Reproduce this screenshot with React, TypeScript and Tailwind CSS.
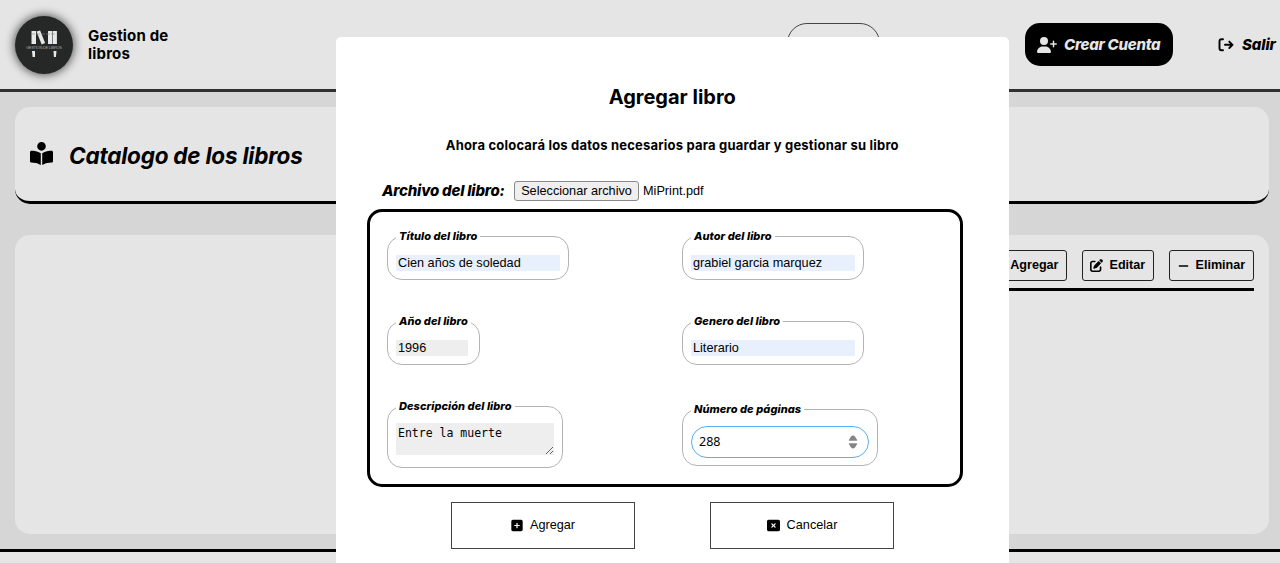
import React from "react";
import {
  FaUserPlus,
  FaBookOpenReader,
  FaPenToSquare,
  FaMinus,
  FaPlus,
  FaSquarePlus,
  FaRectangleXmark,
} from "react-icons/fa6";

function Logo() {
  return (
    <div className="h-[58px] w-[58px] shrink-0 rounded-full bg-[#252827] shadow-[0_0_10px_1px_rgba(0,0,0,0.65)]">
      <svg viewBox="0 0 58 58" className="h-full w-full">
        <g fill="#e8e8e8">
          <rect x="16.500" y="15" width="4.500" height="13" />
          <path d="M21.500 15.500l3.600-.9 5 12.400-3.400 1.600z" />
          <rect x="33" y="15" width="4.200" height="13" />
          <rect x="37.700" y="15" width="4.200" height="13" />
          <path d="M17 35h3v6h-2.400zM38.500 35h3l-.6 6h-2z" />
        </g>
        <path d="M16 18h25" stroke="#888" strokeWidth=".6" strokeDasharray="4 1" />
        <text x="29" y="33.400" textAnchor="middle" fill="#a5a5a5" fontSize="4" fontFamily="Liberation Sans, sans-serif" textLength="36">
          GESTION DE LIBROS
        </text>
      </svg>
    </div>
  );
}

function LogoutIcon() {
  return (
    <svg
      viewBox="0 0 16 14"
      className="mr-2 h-[14px] w-4"
      fill="none"
      stroke="currentColor"
      strokeWidth="1.9"
      strokeLinecap="round"
      strokeLinejoin="round"
    >
      <path d="M5 1.200H3.500Q1.500 1.200 1.500 3.200V10.300Q1.500 12.300 3.500 12.300H5" />
      <path d="M7 6.800H14.500M11.300 3.600L14.500 6.800L11.300 10" />
    </svg>
  );
}

function Field({ label, className, children }: { label: string; className: string; children: React.ReactNode }) {
  return (
    <fieldset className={`rounded-[15px] border border-[#b3b3b3] px-2 ${className}`}>
      <legend className="h-[15px] px-[3px] font-['Inter',sans-serif] text-[11px] leading-[15px] font-extrabold tracking-[0.05px] whitespace-nowrap italic">
        {label}
      </legend>
      {children}
    </fieldset>
  );
}

const toolButton =
  "flex h-[31px] items-center rounded-[3px] border border-[#222] text-[12.6px] font-bold whitespace-nowrap";
const actionButton =
  "flex h-[47px] w-[184px] items-center justify-center gap-[7px] border border-[#444] text-[12.7px]";
const autofill = "block h-4 w-[164px] bg-[#e8f0fe] px-0.5 text-[12.7px] leading-4 outline-none";

function Modal() {
  return (
    <section className="absolute top-[37px] left-[336px] h-[526px] w-[672.5px] rounded-t-[5px] bg-white">
      <h2 className="pt-[46px] text-center font-['Inter',sans-serif] text-[20px] leading-7 font-bold">Agregar libro</h2>
      <p className="mt-[24px] text-center font-['Inter',sans-serif] text-[13px] leading-5 font-bold tracking-[0.2px]">
        Ahora colocará los datos necesarios para guardar y gestionar su libro
      </p>
      <div className="mt-[26px] ml-[46px] flex h-5 items-center">
        <label className="w-[132px] pt-px font-['Inter',sans-serif] text-[15px] font-extrabold tracking-[-0.2px] whitespace-nowrap italic">
          Archivo del libro:
        </label>
        <button className="h-5 w-[125px] rounded-[3px] border border-[#8a8a8a] bg-[#efefef] text-[12.7px] leading-4 whitespace-nowrap">
          Seleccionar archivo
        </button>
        <span className="ml-1 pt-0.5 text-[12.7px]">MiPrint.pdf</span>
      </div>
      <div className="mt-2 ml-[31px] grid h-[278px] w-[596px] grid-cols-[295px_1fr] grid-rows-[51px_51px_70px] content-start items-center justify-items-start gap-y-[34px] rounded-[15px] border-3 border-black pt-[17px] pl-[17px]">
        <Field label="Título del libro" className="h-[51px] w-[182px]">
          <input className={`mt-[11px] ${autofill}`} defaultValue="Cien años de soledad" />
        </Field>
        <Field label="Autor del libro" className="h-[51px] w-[182px]">
          <input className={`mt-[11px] ${autofill}`} defaultValue="grabiel garcia marquez" />
        </Field>
        <Field label="Año del libro" className="h-[51px] w-[93px]">
          <input
            className="mt-[11px] block h-4 w-[72px] bg-[#eee] px-0.5 text-[12.7px] leading-4"
            defaultValue="1996"
          />
        </Field>
        <Field label="Genero del libro" className="h-[51px] w-[182px]">
          <input className={`mt-[11px] ${autofill}`} defaultValue="Literario" />
        </Field>
        <Field label="Descripción del libro" className="-mt-px h-[69px] w-[175.5px]">
          <textarea
            className="mt-[9px] block h-8 w-[158px] overflow-hidden bg-[#eee] p-0.5 font-['DejaVu_Sans_Mono','Liberation_Mono',monospace] text-[11.500px] leading-4"
            defaultValue="Entre la muerte"
          />
        </Field>
        <Field label="Número de páginas" className="h-[64px] w-[195.5px]">
          <div className="mt-[9px] flex h-8 w-[178px] items-center justify-between rounded-full border-[1.5px] border-[#5aaeee] pr-[10px] pl-[7px] font-['Noto_Sans',sans-serif] text-[12.5px]">
            <span>288</span>
            <svg viewBox="0 0 10 14" className="h-[14px] w-[10px]" fill="#858585">
              <path d="M1.300 5.700Q.4 5.700 1 4.700L3 1.600Q5-.6 7 1.600L9 4.700Q9.600 5.700 8.700 5.700zM1.300 8.300Q.4 8.300 1 9.300L3 12.400Q5 14.600 7 12.400L9 9.300Q9.600 8.300 8.700 8.300z" />
            </svg>
          </div>
        </Field>
      </div>
      <div className="mt-[15px] ml-[115px] flex gap-[75px]">
        <button className={actionButton}>
          <FaSquarePlus className="h-[13px] w-3" />
          <span className="pt-px">Agregar</span>
        </button>
        <button className={actionButton}>
          <FaRectangleXmark className="h-[13px] w-[13px]" />
          <span className="pt-px">Cancelar</span>
        </button>
      </div>
    </section>
  );
}

export default function App() {
  return (
    <div className="relative flex h-[563px] w-full flex-col overflow-hidden bg-[#d6d6d6] font-['Liberation_Sans',Arial,sans-serif] text-black">
      <header className="flex h-[92px] shrink-0 items-center border-b-3 border-[#303030] bg-[#e5e5e5] pl-[15px]">
        <Logo />
        <h1 className="ml-[15px] w-[100px] font-['Inter',sans-serif] text-[15px] leading-[18px] font-bold tracking-[0.18px]">
          Gestion de libros
        </h1>
        <div className="ml-[599px] h-[43px] w-[93px] rounded-[20px] border border-[#444]" />
        <button className="ml-[145px] flex h-[43px] w-[148px] shrink-0 items-center rounded-[15px] bg-black pl-3 font-['Inter',sans-serif] text-[15px] font-extrabold tracking-[-0.25px] whitespace-nowrap text-[#e5e5e5] italic">
          <FaUserPlus className="mr-[7px] h-4 w-5 shrink-0" />
          <span className="pt-0.5">Crear Cuenta</span>
        </button>
        <button className="ml-[45px] flex shrink-0 items-center font-['Inter',sans-serif] text-[15px] font-extrabold tracking-[-0.1px] whitespace-nowrap italic">
          <LogoutIcon />
          <span className="pt-0.5">Salir</span>
        </button>
      </header>
      <section className="mt-[15px] ml-[15px] flex h-[97px] w-[1253.5px] shrink-0 items-center rounded-[15px] border-b-3 border-black bg-[#e5e5e5] pl-[15px]">
        <FaBookOpenReader className="mb-0.5 h-[23px] w-[23px]" />
        <h2 className="ml-4 pt-[3px] font-['Inter',sans-serif] text-[22.500px] font-bold tracking-[-0.22px] italic">
          Catalogo de los libros
        </h2>
      </section>
      <section className="mt-[31px] ml-[15px] flex h-[299px] w-[1253.5px] shrink-0 items-start justify-end rounded-[15px] bg-[#e5e5e5] px-[15px] pt-[15px]">
        <div className="flex h-[41px] w-[300px] justify-end gap-[15px] border-b-3 border-black">
          <button className={`${toolButton} w-[86px] justify-end gap-2 pr-[7px]`}>
            <FaPlus className="h-3 w-3" />
            Agregar
          </button>
          <button className={`${toolButton} w-[72px] gap-[7px] pl-[7px]`}>
            <FaPenToSquare className="h-[13px] w-[13px]" />
            Editar
          </button>
          <button className={`${toolButton} w-[85px] gap-[7px] pl-2`}>
            <FaMinus className="h-3 w-[11px]" />
            Eliminar
          </button>
        </div>
      </section>
      <footer className="mt-[15px] h-5 shrink-0 border-t-3 border-black bg-[#e5e5e5]" />
      <Modal />
    </div>
  );
}
